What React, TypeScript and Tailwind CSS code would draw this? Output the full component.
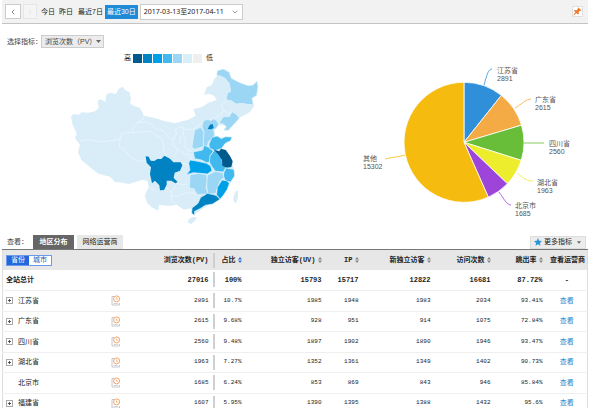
import React from 'react';
import { ChevronDown, ChevronLeft, ChevronRight } from 'lucide-react';

const CJK = "font-['Liberation_Sans','Noto_Sans_CJK_SC',sans-serif]";
const MONO = "font-['Liberation_Mono','Noto_Sans_CJK_SC',monospace]";

const rows = [
  { name: '江苏省', pv: 2891, ratio: '10.7%', uv: 1985, ip: 1948, fresh: 1983, visits: 2034, bounce: '93.41%', open: true },
  { name: '广东省', pv: 2615, ratio: '9.68%', uv: 928, ip: 951, fresh: 914, visits: 1075, bounce: '72.84%', open: true },
  { name: '四川省', pv: 2560, ratio: '9.48%', uv: 1897, ip: 1902, fresh: 1890, visits: 1946, bounce: '93.47%', open: true },
  { name: '湖北省', pv: 1963, ratio: '7.27%', uv: 1352, ip: 1361, fresh: 1349, visits: 1402, bounce: '90.73%', open: true },
  { name: '北京市', pv: 1685, ratio: '6.24%', uv: 853, ip: 869, fresh: 843, visits: 946, bounce: '85.84%', open: false },
  { name: '福建省', pv: 1607, ratio: '5.95%', uv: 1390, ip: 1395, fresh: 1388, visits: 1432, bounce: '95.6%', open: true },
];

const slices = [
  { name: '江苏省', value: 2891, color: '#2f8fd8', x: 147, y: 18, line: 'M134 30 C137 20 138 14 142 14' },
  { name: '广东省', value: 2615, color: '#f5ab45', x: 185, y: 47, line: 'M165 53 C172 49 176 44 181 44' },
  { name: '四川省', value: 2560, color: '#68be39', x: 199, y: 91, line: 'M174 88 L194 88' },
  { name: '湖北省', value: 1963, color: '#eded2e', x: 187, y: 130, line: 'M167 118 C173 123 177 126 183 126' },
  { name: '北京市', value: 1685, color: '#9d45d8', x: 165, y: 153, line: 'M149 137 C154 144 157 150 161 150' },
  { name: '其他', value: 15302, color: '#f5bb0f', x: 13, y: 106, line: 'M55 100 C48 102 43 102 35 104' },
];

const Pie: React.FC = () => {
  const total = slices.reduce((sum, s) => sum + s.value, 0);
  const cx = 114;
  const cy = 87.3;
  const r = 60;
  let angle = 0;

  return (
    <svg width="238" height="170" viewBox="0 0 238 170" className={`text-[7px] ${CJK}`}>
      {slices.map((s) => {
        const from = angle;
        const to = angle + (s.value / total) * Math.PI * 2;
        angle = to;
        const point = (a: number) => `${cx + r * Math.sin(a)} ${cy - r * Math.cos(a)}`;
        return (
          <g key={s.name}>
            <path
              d={`M${cx} ${cy} L${point(from)} A${r} ${r} 0 ${to - from > Math.PI ? 1 : 0} 1 ${point(to)} Z`}
              fill={s.color}
              stroke="#fff"
              strokeWidth="0.8"
            />
            <path d={s.line} fill="none" stroke={s.color} strokeWidth="0.8" />
            <text x={s.x} y={s.y} fill="#555">{s.name}</text>
            <text x={s.x} y={s.y + 8} fill="#555">{s.value}</text>
          </g>
        );
      })}
    </svg>
  );
};

const legend = ['bg-[#005a8c]', 'bg-[#0082c3]', 'bg-[#00a0e9]', 'bg-[#42b9ee]', 'bg-[#9bd6f5]', 'bg-[#d8eef9]', 'bg-[#efefef]'];

const ChinaMap: React.FC = () => (
  <svg width="210" height="165" viewBox="0 45 630 495" strokeLinejoin="round" stroke="#e4f4fc" strokeWidth="2">
    {/* mainland */}
    <path
      fill="#d8edf8"
      stroke="none"
      d="M33 200 L40 192 L58 194 L64 187 L85 188 L105 184 L116 174 L113 151 L122 148 L136 156 L139 134 L150 128 L168 132 L176 116 L188 110 L196 121 L208 126 L213 146 L210 160 L222 168 L240 174 L252 197 L285 204 L310 212 L345 220 L385 209 L407 197 L400 177 L425 172 L445 158 L470 150 L462 137 L448 131 L432 134 L440 112 L456 104 L462 88 L472 78 L472 62 L490 57 L508 67 L514 85 L540 98 L565 107 L580 105 L591 93 L594 110 L590 136 L576 145 L582 168 L570 186 L555 195 L540 202 L528 218 L505 240 L492 240 L497 228 L480 224 L465 238 L462 254 L476 262 L515 262 L495 278 L482 296 L500 300 L517 335 L524 375 L505 410 L480 445 L440 468 L402 494 L394 475 L372 479 L350 464 L325 468 L297 464 L295 482 L275 472 L262 460 L254 436 L266 412 L262 392 L248 389 L226 396 L205 402 L188 398 L165 396 L150 380 L115 371 L90 352 L64 330 L54 306 L60 284 L45 264 L50 250 L38 226 Z"
    />
    {/* borders of the pale provinces */}
    <g fill="none" stroke="#fff" strokeOpacity="0.6" strokeWidth="2">
      <path d="M60 273 L84 269 L110 274 L140 274 L180 268 L178 290 L194 300 L212 322 L236 334 L258 332" />
      <path d="M180 268 L184 250 L218 248 L218 234 L232 218 L252 204 L250 197" />
      <path d="M218 248 L240 246 L268 244 L288 256 L304 266 L312 286 L310 304 L318 318" />
      <path d="M232 218 L258 216 L276 222 L286 236 L310 242 L326 262 L340 270 L336 284 L352 296 L344 320" />
      <path d="M340 270 L350 250 L346 238 L362 230 L372 240 L368 256 L378 268 L372 286 L382 300 L396 304" />
      <path d="M362 230 L384 240 L404 236 M350 250 L362 262 L360 282" />
      <path d="M352 298 L374 312 L390 314 L394 330 M266 412 L285 420 M366 340 L386 344" />
      <path d="M318 412 L334 426 L336 438 L352 440 L372 430 L398 428 L414 434 M336 438 L332 450 L350 462" />
      <path d="M353 396 L362 404 L384 402 M353 396 L344 412 L334 426" />
      <path d="M498 152 L484 168 L490 182 L478 196 L462 206 L430 214 L404 236" />
      <path d="M490 182 L506 190 L516 186" />
    </g>
    <path fill="#9bd6f5" d="M470 76 L472 62 L490 57 L508 67 L514 85 L540 98 L565 107 L580 105 L591 93 L594 110 L590 136 L576 145 L580 164 L562 163 L545 160 L528 162 L514 152 L498 150 L502 130 L512 124 L508 100 L494 84 L480 78 Z" />
    <path fill="#9bd6f5" d="M477 220 L490 200 L508 200 L516 185 L528 192 L538 204 L528 216 L505 241 L491 241 L499 230 L490 222 Z" />
    {/* Hebei, Beijing, Shanxi, Henan */}
    <path fill="#9bd6f5" d="M430 212 L444 208 L452 212 L462 206 L470 212 L476 222 L468 236 L460 238 L464 252 L458 266 L446 274 L440 292 L430 290 L428 268 L432 246 L426 230 Z" />
    <path fill="#9bd6f5" d="M404 240 L422 232 L432 246 L430 268 L430 290 L404 298 L396 292 L400 264 Z" />
    <path fill="#0082c3" stroke="none" d="M443 237 L450 224 L458 222 L461 234 L454 238 Z" />
    <path fill="#42b9ee" d="M447 282 L456 262 L472 258 L484 266 L496 260 L516 261 L512 272 L496 280 L484 296 L464 302 L448 294 Z" />
    <path fill="#42b9ee" d="M400 306 L428 300 L432 286 L446 292 L460 304 L450 318 L456 334 L440 338 L424 330 L404 326 Z" />
    <path fill="#42b9ee" d="M462 302 L472 304 L484 318 L488 342 L498 352 L490 366 L466 364 L456 350 L448 336 L450 318 Z" />
    <path fill="#005a8c" stroke="none" d="M461 299 L478 304 L483 296 L497 300 L510 318 L518 334 L514 351 L500 353 L487 347 L486 330 L474 312 Z" />
    <path fill="#00a0e9" d="M379 374 L390 360 L386 340 L390 330 L414 334 L440 340 L452 348 L456 362 L442 372 L420 370 L400 368 Z" />
    <path fill="#42b9ee" d="M492 366 L498 354 L522 358 L524 378 L512 396 L498 394 L490 380 Z" />
    <path fill="#9bd6f5" d="M390 374 L418 370 L440 374 L442 392 L438 412 L444 432 L412 434 L402 416 L388 414 Z" />
    <path fill="#9bd6f5" d="M442 376 L466 364 L488 368 L492 382 L480 394 L472 414 L468 430 L444 434 L440 410 Z" />
    <path fill="#00a0e9" d="M486 390 L500 392 L508 400 L502 418 L490 436 L480 448 L470 434 L472 412 Z" />
    <path fill="#0082c3" d="M422 442 L436 434 L442 430 L468 436 L480 448 L458 462 L436 466 L420 476 L404 484 L403 496 L395 490 L396 474 L414 460 Z" />
    {/* Sichuan */}
    <path fill="#0082c3" stroke="none" d="M257 319 L266 320 L272 332 L283 333 L292 327 L304 327 L313 317 L330 326 L340 337 L362 337 L367 346 L360 362 L344 368 L341 384 L353 396 L346 400 L334 392 L320 392 L320 404 L312 420 L300 421 L298 406 L285 392 L276 400 L270 372 L273 352 L260 338 Z" />
    {/* Hainan and Taiwan */}
    <path fill="#d8edf8" stroke="none" d="M385 509 L396 501 L410 502 L404 514 L393 522 L384 518 Z M521 438 L528 422 L534 424 L534 442 L527 461 L520 450 Z" />
  </svg>
);

const Sort: React.FC<{ active?: boolean }> = ({ active }) => (
  <svg width="4" height="6" viewBox="0 0 4 6" fill={active ? '#2f74d8' : '#888'} className="ml-[2px] inline-block align-middle">
    <path d="M0 2.5 L2 0 L4 2.5 Z M0 3.5 L2 6 L4 3.5 Z" />
  </svg>
);

const Trend: React.FC = () => (
  <svg width="10" height="11" viewBox="0 0 10 11" fill="none">
    <path d="M3 1.5 H1 V10 H8.5 V8" stroke="#b9b9c4" strokeWidth="0.8" />
    <path d="M2.5 8.5 H7" stroke="#c9c9d2" strokeWidth="0.8" />
    <circle cx="5.6" cy="3.9" r="3" fill="#fff" stroke="#f2a468" />
    <path d="M5.4 2.4 V4.2 H7" stroke="#f2a468" strokeWidth="0.8" />
  </svg>
);

const Ratio: React.FC<{ children: React.ReactNode }> = ({ children }) => (
  <div className="flex h-[15px] items-center justify-end border-l-2 border-[#cfcfcf] pr-1">{children}</div>
);

const columns = ['独立访客(UV)', 'IP', '新独立访客', '访问次数', '跳出率'];

export default function App() {
  return (
    <div className={`bg-white text-[7px] leading-[10px] text-[#222] ${CJK}`}>
      <header className="ml-[2px] mr-3 flex h-6 items-center border-b border-[#c4c4c4] bg-[#f2f2f2] pr-[5px]">
        <button aria-label="上一页" className="ml-[3px] flex h-[15px] w-4 items-center justify-center border border-[#ccc] bg-white">
          <ChevronLeft size={8} color="#444" />
        </button>
        <button aria-label="下一页" disabled className="ml-[2px] flex h-[15px] w-[14px] items-center justify-center border border-[#e6e6e6] bg-[#f5f5f5]">
          <ChevronRight size={8} color="#ddd" />
        </button>
        <nav className="ml-1 flex items-center">
          <button>今日</button>
          <button className="ml-1">昨日</button>
          <button className="ml-[5px]">最近7日</button>
          <button className="ml-[2px] h-[14px] bg-[#1f8ad6] px-[2px] text-white">最近30日</button>
        </nav>
        <button className="ml-[2px] flex h-4 w-[103px] items-center justify-between border border-[#ccc] bg-white px-[3px] font-['Noto_Sans','Noto_Sans_CJK_SC',sans-serif]">
          <span>2017-03-13至2017-04-11</span>
          <ChevronDown size={8} color="#666" />
        </button>
        <button aria-label="固定" className="ml-auto flex h-[11px] w-[11px] items-center justify-center border border-[#e0e0e0] bg-white">
          <svg width="9" height="9" viewBox="0 0 9 9" fill="#ee7c30">
            <path d="M5.2 0.5 L8.6 3.4 L7.6 4 L6.7 3.8 L5.6 5.2 L5.8 7 L5 7.6 L3.4 6.2 L0.8 8.4 L0.4 8 L2.5 5.3 L0.9 3.8 L1.6 3.1 L3.4 3.2 L4.9 2 L4.7 1.1 Z" />
          </svg>
        </button>
      </header>

      <main className="ml-[2px] mr-3">
        <div className="flex">
          <section className="flex-1 pl-[5px] pt-[11px]">
            <div className="flex h-[13px] items-center text-[#444]">
              <label htmlFor="metric" className="w-[34px] whitespace-nowrap">选择指标：</label>
              <div className="relative">
                <select id="metric" className="block h-[13px] w-[63px] appearance-none border border-[#ccc] bg-[#ececec] pl-[3px] leading-[10px]">
                  <option>浏览次数（PV）</option>
                </select>
                <svg width="5" height="3" viewBox="0 0 5 3" fill="#666" className="pointer-events-none absolute right-[3px] top-[5px]">
                  <path d="M0 0 H5 L2.5 3 Z" />
                </svg>
              </div>
            </div>
            <div className="ml-[117px] mt-[5px] flex h-[10px] items-center gap-px">
              <span className="mr-px">高</span>
              {legend.map((c) => (
                <i key={c} className={`h-[9px] w-[9px] ${c}`} />
              ))}
              <span className="ml-[3px]">低</span>
            </div>
            <div className="ml-[53px] mt-[2px]">
              <ChinaMap />
            </div>
          </section>
          <section className="pt-[31px]">
            <Pie />
          </section>
        </div>

        <div className="mt-[5px] flex h-[15px] items-center border-b border-[#777] pl-[5px]">
          <span className="w-[26px] text-[#444]">查看：</span>
          <button className="h-[14px] w-[41px] bg-[#666] font-bold text-white">地区分布</button>
          <button className="ml-[3px] h-[14px] w-[46px] bg-[#e8e8e8]">网络运营商</button>
          <button className="ml-auto mr-[2px] flex h-[13px] w-14 items-center border border-[#ddd] bg-[#ececec] pl-[3px]">
            <svg width="8" height="8" viewBox="0 0 24 24" fill="#2b95dc">
              <path d="M12 0 L15.6 8 L24 9 L17.8 14.8 L19.5 23.4 L12 19 L4.5 23.4 L6.2 14.8 L0 9 L8.4 8 Z" />
            </svg>
            <span className="ml-[2px]">更多指标</span>
            <svg width="4" height="3" viewBox="0 0 5 3" fill="#666" className="ml-auto mr-1">
              <path d="M0 0 H5 L2.5 3 Z" />
            </svg>
          </button>
        </div>

        <table className={`w-full table-fixed border-collapse border-l border-r border-[#ddd] text-right ${MONO}`}>
          <colgroup>
            <col />
            <col className="w-[80px]" />
            <col className="w-[33px]" />
            <col className="w-[80px]" />
            <col className="w-[37px]" />
            <col className="w-[72px]" />
            <col className="w-[60px]" />
            <col className="w-[52px]" />
            <col className="w-[41px]" />
          </colgroup>
          <thead>
            <tr className="h-5 whitespace-nowrap bg-[#e7e7e7]">
              <th className="p-0 pl-[3px] font-normal">
                <div className="flex h-[11px] w-[46px] border border-[#6a9aea] leading-[9px]">
                  <button className="flex-1 bg-[#2467dc] text-white">省份</button>
                  <button className="flex-1 bg-white text-[#2a5db0]">城市</button>
                </div>
              </th>
              <th className="p-0 pr-1">浏览次数(PV)</th>
              <th className="p-0"><Ratio>占比<Sort active /></Ratio></th>
              {columns.map((c) => (
                <th key={c} className="p-0 pr-1">{c}<Sort /></th>
              ))}
              <th className="p-0 pr-[2px]">查看运营商</th>
            </tr>
          </thead>
          <tbody>
            <tr className="h-5 border-b border-[#efefef] font-bold">
              <td className="p-0 pl-[3px] text-left">全站总计</td>
              <td className="p-0 pr-1">27016</td>
              <td className="p-0"><Ratio>100%</Ratio></td>
              <td className="p-0 pr-1">15793</td>
              <td className="p-0 pr-1">15717</td>
              <td className="p-0 pr-1">12822</td>
              <td className="p-0 pr-1">16681</td>
              <td className="p-0 pr-1">87.72%</td>
              <td className="p-0 text-center">-</td>
            </tr>
            {rows.map((r) => (
              <tr key={r.name} className="border-b border-[#efefef] text-[6px] odd:h-5 even:h-[21px]">
                <td className="p-0 pl-[3px] pr-3">
                  <div className="flex items-center">
                    <div className="w-3">
                      {r.open && (
                        <button aria-label="展开" className="block">
                          <svg width="7" height="7" viewBox="0 0 7 7" fill="none" shapeRendering="crispEdges">
                            <path d="M0.5 0.5 H6.5 V6.5 H0.5 Z" stroke="#aaa" />
                            <path d="M2 3.5 H5 M3.5 2 V5" stroke="#555" />
                          </svg>
                        </button>
                      )}
                    </div>
                    <span className="text-[7px]">{r.name}</span>
                    <button aria-label="历史趋势" className="ml-auto"><Trend /></button>
                  </div>
                </td>
                <td className="p-0 pr-1">{r.pv}</td>
                <td className="p-0"><Ratio>{r.ratio}</Ratio></td>
                <td className="p-0 pr-1">{r.uv}</td>
                <td className="p-0 pr-1">{r.ip}</td>
                <td className="p-0 pr-1">{r.fresh}</td>
                <td className="p-0 pr-1">{r.visits}</td>
                <td className="p-0 pr-1">{r.bounce}</td>
                <td className="p-0 text-center text-[7px]"><a href="#isp" className="text-[#1b8ad0]">查看</a></td>
              </tr>
            ))}
          </tbody>
        </table>
      </main>
    </div>
  );
}
